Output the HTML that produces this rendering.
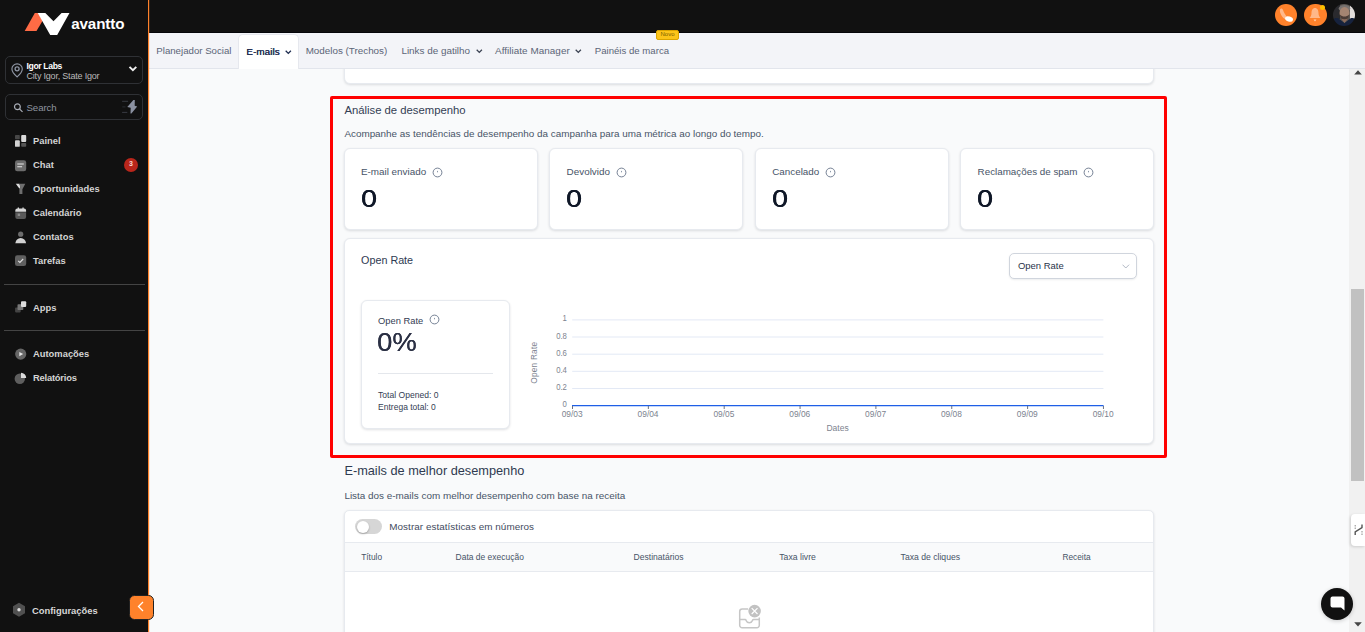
<!DOCTYPE html>
<html lang="pt-BR">
<head>
<meta charset="utf-8">
<title>Avantto - E-mails</title>
<style>
*{box-sizing:border-box;margin:0;padding:0}
html,body{width:1365px;height:632px;overflow:hidden;background:#f9fafb;font-family:"Liberation Sans",sans-serif;color:#344054}
.abs{position:absolute}
#sidebar{position:absolute;left:0;top:0;width:149px;height:632px;background:#111111;border-right:1px solid #ff822b}
#topbar{position:absolute;left:149px;top:0;width:1216px;height:33px;background:#111111;border-bottom:1px solid #05060a}
#navbar{position:absolute;left:149px;top:33px;width:1216px;height:36px;background:#f3f4f8;border-bottom:1px solid #e2e5ec}
#main{position:absolute;left:149px;top:69px;width:1200px;height:563px;background:#f9fafb;overflow:hidden}
#scroll{position:absolute;left:1349px;top:69px;width:16px;height:563px;background:#f1f1f1}
#scroll .thumb{position:absolute;left:2px;top:220px;width:13px;height:192px;background:#c1c1c1}
.card{position:absolute;background:#fff;border:1px solid #e7eaef;border-radius:6px;box-shadow:0 1px 2.500px rgba(16,24,40,.13)}
.t{position:absolute;white-space:nowrap;line-height:1}
.nav-item{position:absolute;line-height:1;color:#5b6577;white-space:nowrap}
.side-item{position:absolute;left:33px;font-size:9.400px;font-weight:bold;color:#d4d4d4;white-space:nowrap;line-height:1}
.hr{position:absolute;left:4px;width:141px;height:1px;background:#444}
.big{top:118px;font-size:24.600px;color:#101828;text-shadow:0.400px 0 0 #101828,0 0.250px 0 #101828;transform:scaleX(1.150);transform-origin:0 0}
</style>
</head>
<body>

<!-- SIDEBAR -->
<div id="sidebar">
  <svg class="abs" style="left:0;top:0" width="148" height="45" viewBox="0 0 148 45">
    <polygon points="34.800,12.900 38.200,12.900 42.600,20.800 36.500,30.900 24.700,30.900" fill="#ff6b45"/>
    <polygon points="37.700,12.900 45.300,12.900 53.500,21.300 61.600,12.900 69.500,12.900 57.200,34.900 50.200,34.900" fill="#ffffff"/>
    <text x="71.200" y="29.200" font-family="Liberation Sans, sans-serif" font-size="15.200" font-weight="bold" fill="#ffffff" letter-spacing="-0.5" textLength="52.800" lengthAdjust="spacing">avantto</text>
  </svg>

  <div class="abs" style="left:5px;top:56px;width:138px;height:28px;border:1px solid #2f3135;border-radius:5px"></div>
  <svg class="abs" style="left:10px;top:62px" width="14" height="16" viewBox="0 0 14 16" fill="none" stroke="#8e95a3" stroke-width="1.150">
    <path d="M7.100 14.900C7.100 14.900 1.900 10.300 1.900 7a5.200 5.200 0 0 1 10.400 0C12.300 10.300 7.100 14.900 7.100 14.900z"/>
    <circle cx="7.100" cy="6.800" r="2" stroke-width="1.300"/>
  </svg>
  <div class="t" style="left:26.500px;top:61.800px;font-size:8.600px;font-weight:bold;color:#fff;letter-spacing:-0.350px">Igor Labs</div>
  <div class="t" style="left:26.500px;top:71.500px;font-size:9px;color:#b9b9b9;letter-spacing:-0.200px">City Igor, State Igor</div>
  <svg class="abs" style="left:128px;top:65px" width="10" height="8" viewBox="0 0 10 8" fill="none" stroke="#f0f0f0" stroke-width="1.900"><path d="M1.500 1.800l3.400 3.400 3.400-3.400"/></svg>

  <div class="abs" style="left:5px;top:94px;width:138px;height:26px;border:1px solid #2f3135;border-radius:5px"></div>
  <svg class="abs" style="left:13px;top:102px" width="11" height="11" viewBox="0 0 11 11" fill="none" stroke="#a9adb6" stroke-width="1.200"><circle cx="4.400" cy="4.700" r="2.900"/><path d="M6.500 6.900l3 3"/></svg>
  <div class="t" style="left:26.500px;top:102.700px;font-size:9.700px;color:#8f95a0;letter-spacing:-0.100px">Search</div>
  <svg class="abs" style="left:121px;top:99px" width="18" height="16" viewBox="0 0 18 16"><path d="M1.100 2.300h6M1.100 13.400h5.200" stroke="#383b42" stroke-width="1"/><path d="M1.300 7.900h3.200" stroke="#2a2d32" stroke-width="1"/><path d="M12.400 1.100L6.300 8.100l3.400 0.600-0.200 5.800h0.900L16.200 7.400l-2.500-0.700 0.100-5.600z" fill="#8a90a0"/></svg>

  <!-- menu icons -->
  <svg class="abs" style="left:15px;top:135px" width="12" height="12" viewBox="0 0 12 12"><rect x="0" y="0" width="4.800" height="4.200" rx="0.800" fill="#474747"/><rect x="6.200" y="0" width="5" height="6.900" rx="0.900" fill="#dadada"/><rect x="0" y="5.300" width="4.800" height="6.500" rx="0.900" fill="#d2d2d2"/><rect x="6.200" y="8" width="5" height="3.800" rx="0.800" fill="#555"/></svg>
  <div class="side-item" style="top:136px">Painel</div>

  <svg class="abs" style="left:15px;top:159.500px" width="12" height="12" viewBox="0 0 12 12"><rect x="0" y="0.200" width="11.200" height="11" rx="2.300" fill="#6c6c6c"/><path d="M2.300 4h6.500M2.300 6.700h4.800" stroke="#e8e8e8" stroke-width="1.100"/></svg>
  <div class="side-item" style="top:160px">Chat</div>
  <div class="abs" style="left:124px;top:157.700px;width:14.300px;height:14px;border-radius:7px;background:#b9261b"></div>
  <div class="t" style="left:129px;top:159.800px;font-size:7px;font-weight:bold;color:#f9d8d3">3</div>

  <svg class="abs" style="left:15px;top:183px" width="12" height="12" viewBox="0 0 12 12"><path d="M0.800 0.800h3.600l1.200 3.400L4.500 5.800z" fill="#dcdcdc"/><path d="M4.200 0.800h6.100L7.400 6.200v4.800H4.400V6.200L5.500 4.200z" fill="#6e6e6e"/></svg>
  <div class="side-item" style="top:184px">Oportunidades</div>

  <svg class="abs" style="left:15px;top:206.500px" width="12" height="13" viewBox="0 0 12 13"><path d="M0.300 5.300h10.800v4.800a2 2 0 0 1-2 2H2.300a2 2 0 0 1-2-2z" fill="#5a5a5a"/><path d="M0.300 4.700V3.600a2 2 0 0 1 2-2h0.400V0.400h1.300v1.200h3.400V0.400h1.300v1.200h0.400a2 2 0 0 1 2 2v1.100z" fill="#d8d8d8"/><rect x="2.700" y="6.600" width="2.400" height="2.400" fill="#8c8c8c"/></svg>
  <div class="side-item" style="top:208px">Calendário</div>

  <svg class="abs" style="left:15px;top:231px" width="12" height="13" viewBox="0 0 12 13"><circle cx="5.700" cy="3.200" r="2.600" fill="#6c6c6c"/><path d="M0.300 12.200c0.600-3.200 2.400-5.300 5.400-5.300s4.800 2.100 5.400 5.300z" fill="#d2d2d2"/></svg>
  <div class="side-item" style="top:232px">Contatos</div>

  <svg class="abs" style="left:15px;top:255.300px" width="12" height="12" viewBox="0 0 12 12"><rect x="0" y="0.200" width="11.200" height="10.800" rx="2.300" fill="#606060"/><path d="M3.200 5.800l1.700 1.700 3.300-3.500" stroke="#dedede" stroke-width="1.100" fill="none"/></svg>
  <div class="side-item" style="top:256px">Tarefas</div>

  <div class="hr" style="top:284px"></div>

  <svg class="abs" style="left:15px;top:301px" width="12" height="12" viewBox="0 0 12 12"><rect x="0.100" y="6.400" width="5.600" height="5" rx="0.800" fill="#444"/><rect x="2.500" y="3.300" width="5.800" height="5.700" rx="0.800" fill="#777"/><rect x="6" y="0.300" width="5.200" height="5.700" rx="1" fill="#dedede"/></svg>
  <div class="side-item" style="top:303px">Apps</div>

  <div class="hr" style="top:330px"></div>

  <svg class="abs" style="left:15px;top:348px" width="12" height="12" viewBox="0 0 12 12"><circle cx="5.700" cy="6.100" r="5.600" fill="#666"/><path d="M4.300 3.900v4.400l3.900-2.200z" fill="#e6e6e6"/></svg>
  <div class="side-item" style="top:349px">Automações</div>

  <svg class="abs" style="left:14px;top:372px" width="13" height="13" viewBox="0 0 13 13"><circle cx="5.800" cy="6.800" r="5.200" fill="#5e5e5e"/><path d="M7 0.700a5.200 5.200 0 0 1 5.200 5.200H7z" fill="#dcdcdc"/></svg>
  <div class="side-item" style="top:373px;letter-spacing:-0.220px">Relatórios</div>

  <svg class="abs" style="left:12px;top:602px" width="14" height="16" viewBox="0 0 14 16"><path d="M7 0.800l6 3.500v7l-6 3.500-6-3.500v-7z" fill="#505050"/><circle cx="7" cy="7.800" r="1.700" fill="#dcdcdc"/></svg>
  <div class="side-item" style="left:32px;top:606px;color:#d8d8d8">Configurações</div>
</div>

<div class="abs" style="left:129px;top:595px;width:25px;height:25px;border-radius:5.500px;background:#ff822b;border:1px solid #222;z-index:10"></div>
<svg class="abs" style="left:137.100px;top:601.200px;z-index:11" width="8" height="11" viewBox="0 0 8 11" fill="none" stroke="#fff" stroke-width="1.300"><path d="M6 1L1.500 5.500 6 10"/></svg>

<div class="abs" style="left:149px;top:0;width:1px;height:632px;background:rgba(255,130,43,.18);z-index:5"></div>
<!-- TOPBAR -->
<div id="topbar">
  <div class="abs" style="left:1126px;top:4px;width:22px;height:22px;border-radius:11px;background:#ff822b"></div>
  <svg class="abs" style="left:1126px;top:4px" width="22" height="22" viewBox="0 0 22 22"><path d="M5 5.200c1.200-1.200 2.400-0.600 3 0.800 0.900 2.300 1.800 4.300 3.600 6.400l-1.800 2.600C7 13 4.200 8.500 5 5.200z" fill="#ffb98c"/><ellipse cx="14" cy="15" rx="4.100" ry="2.500" transform="rotate(18 14 15)" fill="#ffffff"/></svg>
  <div class="abs" style="left:1155px;top:4px;width:23px;height:22px;border-radius:11px;background:#ff822b"></div>
  <svg class="abs" style="left:1160px;top:7px" width="12" height="16" viewBox="0 0 12 16"><path d="M6 1c-2.500 0-3.500 2.500-3.500 5S1.500 10 0.500 11h11c-1-1-2-2.500-2-5S8.500 1 6 1z" fill="#ffb889"/><path d="M4.500 12.500h3L6 14.500z" fill="#ffd2b4"/></svg>
  <div class="abs" style="left:1171px;top:5px;width:5px;height:5px;border-radius:3px;background:#fdbf00"></div>
  <!-- avatar -->
  <svg class="abs" style="left:1184px;top:4px" width="22" height="22" viewBox="0 0 22 22">
    <defs><clipPath id="avc"><circle cx="11" cy="11" r="11"/></clipPath><filter id="avb" x="-20%" y="-20%" width="140%" height="140%"><feGaussianBlur stdDeviation="0.700"/></filter></defs>
    <g clip-path="url(#avc)"><g filter="url(#avb)">
      <rect x="-2" y="-2" width="26" height="26" fill="#5b5652"/>
      <rect x="-2" y="-2" width="9" height="17" fill="#2c2c2e"/>
      <rect x="17" y="1" width="7" height="16" fill="#e2dedb"/>
      <ellipse cx="11.500" cy="4.500" rx="5.800" ry="3.500" fill="#77726f"/>
      <ellipse cx="11.500" cy="9" rx="5" ry="6" fill="#a58471"/>
      <path d="M6.800 10.500c0.500 4 2.500 6 4.700 6s4.200-2 4.700-6c-1.500 1.500-3 2-4.700 2s-3.200-0.500-4.700-2z" fill="#4b3b36"/>
      <path d="M-2 24V17c2-2.500 5-3 7-3l6.500 5 6.500-5c2 0 5 0.500 7 3v7z" fill="#13243d"/>
      <path d="M8 14.500l3.500 4.500 3.500-4.500c-2 1-5 1-7 0z" fill="#8a6a5a"/>
    </g></g>
  </svg>
</div>

<!-- NAVBAR -->
<div id="navbar">
  <div class="nav-item" style="left:7.300px;top:12.900px;font-size:9.660px">Planejador Social</div>
  <div class="abs" style="left:89px;top:1px;width:61px;height:35px;background:#fff;border:1px solid #e6e8ee;border-bottom:none;border-radius:5px 5px 0 0"></div>
  <div class="nav-item" style="left:97.300px;top:13.700px;font-size:9.900px;letter-spacing:0.050px;color:#1d2b4f;text-shadow:0.300px 0 0 #1d2b4f">E-mails</div>
  <svg class="abs" style="left:135.500px;top:17px" width="7" height="5" viewBox="0 0 7 5" fill="none" stroke="#1d2b4f" stroke-width="1.300"><path d="M0.700 0.800l2.600 2.600 2.600-2.600"/></svg>
  <div class="nav-item" style="left:156.700px;top:12.900px;font-size:9.840px">Modelos (Trechos)</div>
  <div class="nav-item" style="left:252.400px;top:12.900px;font-size:9.900px">Links de gatilho</div>
  <svg class="abs" style="left:326.500px;top:15.500px" width="7" height="5" viewBox="0 0 7 5" fill="none" stroke="#3b4252" stroke-width="1.300"><path d="M0.700 0.800l2.600 2.600 2.600-2.600"/></svg>
  <div class="nav-item" style="left:346px;top:12.900px;font-size:9.900px;letter-spacing:0.050px">Affiliate Manager</div>
  <svg class="abs" style="left:426px;top:15.500px" width="7" height="5" viewBox="0 0 7 5" fill="none" stroke="#3b4252" stroke-width="1.300"><path d="M0.700 0.800l2.600 2.600 2.600-2.600"/></svg>
  <div class="nav-item" style="left:445.800px;top:12.900px;font-size:9.620px">Painéis de marca</div>
  <div class="abs" style="left:507.400px;top:-3.200px;width:22.200px;height:10px;background:#fcc419;border:1px solid #dba400;border-radius:2px;z-index:6"></div>
  <div class="t" style="left:511.500px;top:-1.800px;font-size:6px;color:#7a5b00;z-index:7">Novo</div>
</div>

<!-- MAIN -->
<div id="main">
  <!-- coordinates inside main: x-149, y-69 -->
  <div class="card" style="left:195px;top:-20px;width:810px;height:35px"></div>

  <div class="abs" style="left:181px;top:27px;width:837px;height:362px;border:3px solid #ff0000;border-radius:2px"></div>

  <div class="t" style="left:195.400px;top:35.500px;font-size:11.300px;color:#344054">Análise de desempenho</div>
  <div class="t" style="left:195.400px;top:59.800px;font-size:9.880px;color:#475467">Acompanhe as tendências de desempenho da campanha para uma métrica ao longo do tempo.</div>

  <!-- stat cards -->
  <div class="card" style="left:195px;top:79px;width:194px;height:82px"></div>
  <div class="card" style="left:400px;top:79px;width:194px;height:82px"></div>
  <div class="card" style="left:606px;top:79px;width:194px;height:82px"></div>
  <div class="card" style="left:811px;top:79px;width:194px;height:82px"></div>

  <div class="t" style="left:211.900px;top:97.900px;font-size:9.900px;color:#475467">E-mail enviado</div>
  <div class="t" style="left:417.600px;top:97.900px;font-size:9.900px;color:#475467">Devolvido</div>
  <div class="t" style="left:623.200px;top:97.900px;font-size:9.850px;color:#475467">Cancelado</div>
  <div class="t" style="left:828.600px;top:97.900px;font-size:9.820px;color:#475467">Reclamações de spam</div>

  <svg class="abs" style="left:283.100px;top:98.100px" width="11" height="11" viewBox="0 0 11 11" fill="none" stroke="#5d6b82" stroke-width="0.850"><circle cx="5.500" cy="5.500" r="4.400"/><path d="M5.500 3.900v1.400" stroke="#7a869a"/></svg>
  <svg class="abs" style="left:467px;top:98.100px" width="11" height="11" viewBox="0 0 11 11" fill="none" stroke="#5d6b82" stroke-width="0.850"><circle cx="5.500" cy="5.500" r="4.400"/><path d="M5.500 3.900v1.400" stroke="#7a869a"/></svg>
  <svg class="abs" style="left:676px;top:98.100px" width="11" height="11" viewBox="0 0 11 11" fill="none" stroke="#5d6b82" stroke-width="0.850"><circle cx="5.500" cy="5.500" r="4.400"/><path d="M5.500 3.900v1.400" stroke="#7a869a"/></svg>
  <svg class="abs" style="left:933.900px;top:98.100px" width="11" height="11" viewBox="0 0 11 11" fill="none" stroke="#5d6b82" stroke-width="0.850"><circle cx="5.500" cy="5.500" r="4.400"/><path d="M5.500 3.900v1.400" stroke="#7a869a"/></svg>

  <div class="t big" style="left:211.600px">0</div>
  <div class="t big" style="left:417.300px">0</div>
  <div class="t big" style="left:622.900px">0</div>
  <div class="t big" style="left:828.300px">0</div>

  <!-- chart card -->
  <div class="card" style="left:195px;top:169px;width:810px;height:206px"></div>
  <div class="t" style="left:212.100px;top:186.100px;font-size:10.750px;color:#2e3a52">Open Rate</div>

  <div class="abs" style="left:860px;top:184px;width:128px;height:26px;border:1px solid #d0d5dd;border-radius:5px;background:#fff;box-shadow:0 1px 2px rgba(16,24,40,.08)"></div>
  <div class="t" style="left:868.900px;top:192.100px;font-size:9.480px;color:#28324a">Open Rate</div>
  <svg class="abs" style="left:972.700px;top:195px" width="8" height="5" viewBox="0 0 8 5" fill="none" stroke="#a9b1be" stroke-width="0.900"><path d="M0.500 0.700l3.300 3.300 3.300-3.300"/></svg>

  <div class="card" style="left:212px;top:231px;width:149px;height:129px"></div>
  <div class="t" style="left:229.100px;top:248px;font-size:9.340px;color:#344054">Open Rate</div>
  <svg class="abs" style="left:280px;top:245.100px" width="11" height="11" viewBox="0 0 11 11" fill="none" stroke="#5d6b82" stroke-width="0.850"><circle cx="5.500" cy="5.500" r="4.400"/><path d="M5.500 3.900v1.400" stroke="#7a869a"/></svg>
  <div class="t" style="left:228px;top:260.500px;font-size:25.600px;color:#2b3044;transform:scaleX(1.070);transform-origin:0 0;text-shadow:0.300px 0 0 #2b3044">0%</div>
  <div class="abs" style="left:229px;top:304px;width:115px;height:1px;background:#e4e7ec"></div>
  <div class="t" style="left:229.100px;top:321.600px;font-size:8.550px;color:#344054">Total Opened: 0</div>
  <div class="t" style="left:229.100px;top:334.400px;font-size:8.510px;color:#344054">Entrega total: 0</div>

  <!-- chart -->
  <svg class="abs" style="left:351px;top:231px" width="640" height="140" viewBox="0 0 640 140" font-family="Liberation Sans, sans-serif">
    <g stroke="#e3e9f5" stroke-width="1">
      <path d="M72.200 19.900H603.400M72.200 37.000H603.400M72.200 54.200H603.400M72.200 71.300H603.400M72.200 88.500H603.400"/>
    </g>
    <path d="M72 105.500H603.600" stroke="#1f5fe6" stroke-width="1.250"/>
    <g stroke="#6b7280" stroke-width="1">
      <path d="M72.500 106v3M148.350 106v3M224.200 106v3M300.050 106v3M375.900 106v3M451.750 106v3M527.600 106v3M603.450 106v3"/>
    </g>
    <g font-size="8.800" fill="#7d838f" text-anchor="end">
      <text transform="translate(66.900 21.400) scale(0.880 1)">1</text>
      <text transform="translate(66.900 38.500) scale(0.880 1)">0.8</text>
      <text transform="translate(66.900 55.700) scale(0.880 1)">0.6</text>
      <text transform="translate(66.900 72.800) scale(0.880 1)">0.4</text>
      <text transform="translate(66.900 90.000) scale(0.880 1)">0.2</text>
      <text transform="translate(66.900 107.000) scale(0.880 1)">0</text>
    </g>
    <g font-size="8.400" fill="#7d838f" text-anchor="middle">
      <text x="72.200" y="117.100">09/03</text>
      <text x="148.050" y="117.100">09/04</text>
      <text x="223.900" y="117.100">09/05</text>
      <text x="299.750" y="117.100">09/06</text>
      <text x="375.600" y="117.100">09/07</text>
      <text x="451.450" y="117.100">09/08</text>
      <text x="527.300" y="117.100">09/09</text>
      <text x="603.150" y="117.100">09/10</text>
      <text x="337.600" y="131.400" font-size="8.500">Dates</text>
    </g>
    <text transform="translate(37.200 62.700) rotate(-90)" font-size="8.300" letter-spacing="0.200" fill="#7d838f" text-anchor="middle">Open Rate</text>
  </svg>

  <!-- best emails -->
  <div class="t" style="left:195.400px;top:395.800px;font-size:12.760px;color:#2f3a50">E-mails de melhor desempenho</div>
  <div class="t" style="left:195.400px;top:421.500px;font-size:9.910px;color:#475467">Lista dos e-mails com melhor desempenho com base na receita</div>

  <div class="card" style="left:195px;top:441px;width:810px;height:140px;border-radius:5px 5px 0 0"></div>
  <div class="abs" style="left:196px;top:473px;width:808px;height:30px;background:#f9fafb;border-top:1px solid #e7eaef;border-bottom:1px solid #e7eaef"></div>
  <div class="abs" style="left:206px;top:450px;width:27px;height:15px;border-radius:8px;background:#d6d6d6"></div>
  <div class="abs" style="left:207.500px;top:451.500px;width:12px;height:12px;border-radius:6px;background:#fff;box-shadow:0 1px 2px rgba(0,0,0,.25)"></div>
  <div class="t" style="left:240.300px;top:453px;font-size:9.900px;letter-spacing:0.050px;color:#3f4b5e">Mostrar estatísticas em números</div>

  <div class="t th" style="left:212.200px;top:484px;font-size:8.350px">Título</div>
  <div class="t th" style="left:306.600px;top:484px;font-size:8.470px">Data de execução</div>
  <div class="t th" style="left:484.600px;top:484px;font-size:8.550px">Destinatários</div>
  <div class="t th" style="left:630.300px;top:484px;font-size:8.660px">Taxa livre</div>
  <div class="t th" style="left:751.600px;top:484px;font-size:8.630px">Taxa de cliques</div>
  <div class="t th" style="left:913.400px;top:484px;font-size:8.320px">Receita</div>

  <svg class="abs" style="left:586px;top:531px" width="30" height="32" viewBox="0 0 30 32" fill="none"><path d="M13 8.900H7.200a2.500 2.500 0 0 0-2.500 2.500v13.800a2.500 2.500 0 0 0 2.500 2.500h14.600a2.500 2.500 0 0 0 2.500-2.500V17.500" stroke="#c6c6c6" stroke-width="1.500"/><path d="M4.700 19.600h5.400c0.600 0 0.800 0.300 1 0.800a3.400 3.400 0 0 0 6.400 0c0.200-0.500 0.400-0.800 1-0.800h5.800" stroke="#c6c6c6" stroke-width="1.500"/><circle cx="19.600" cy="11.100" r="6.300" fill="#c2c2c2"/><path d="M16.700 8.200l5.800 5.800M22.500 8.200l-5.800 5.800" stroke="#fff" stroke-width="1.200"/></svg>
</div>

<!-- SCROLLBAR -->
<div id="scroll">
  <div class="thumb"></div>
  <svg class="abs" style="left:4.500px;top:0.500px" width="8" height="5" viewBox="0 0 8 5"><path d="M0.200 4.500L4 0.300 7.800 4.500z" fill="#454545"/></svg>
  <svg class="abs" style="left:4.500px;top:552.500px" width="8" height="5" viewBox="0 0 8 5"><path d="M0.200 0.300h7.600L4 4.600z" fill="#454545"/></svg>
</div>

<!-- floating tab -->
<div class="abs" style="left:1351px;top:514px;width:14px;height:32px;background:#fff;border-radius:4px 0 0 4px;box-shadow:-1px 1px 3px rgba(0,0,0,.15)"></div>
<svg class="abs" style="left:1354px;top:524px" width="9" height="12" viewBox="0 0 9 12" fill="none"><path d="M1.200 11V8L8 3.500V0.500" stroke="#555" stroke-width="1.400"/><path d="M1.200 1v4M8 7v4" stroke="#888" stroke-width="1" stroke-dasharray="1.500 1"/></svg>

<!-- chat bubble -->
<div class="abs" style="left:1321px;top:588px;width:32px;height:32px;border-radius:16px;background:#111;box-shadow:0 1px 4px rgba(0,0,0,.2)"></div>
<svg class="abs" style="left:1329.700px;top:596px" width="15" height="15" viewBox="0 0 15 15"><path d="M2.500 0.500h10a2 2 0 0 1 2 2v12l-3.500-3H2.500a2 2 0 0 1-2-2v-7a2 2 0 0 1 2-2z" fill="#fff"/></svg>

<style>.th{color:#475467}</style>
</body>
</html>
